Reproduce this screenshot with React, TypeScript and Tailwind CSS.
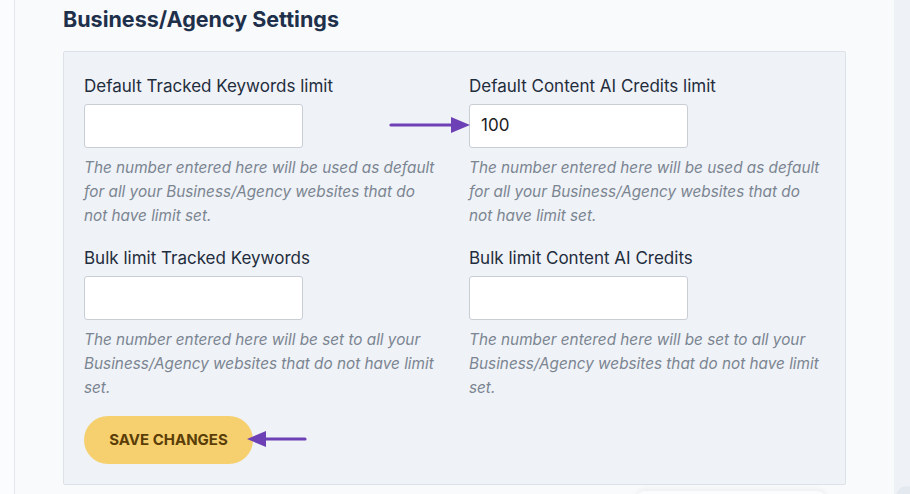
import React from "react";

const font = { fontFamily: "Inter, 'Liberation Sans', sans-serif" };

function Field({ label, value, lines }: { label: string; value?: string; lines: string[] }) {
  return (
    <div className="flex flex-col">
      <label className="text-[17px] leading-[24px] text-[#1f2d3d]">{label}</label>
      <div className="mt-[6px] h-[44px] w-[219px] rounded-[3px] border border-[#c9ced5] bg-white pl-[11px] flex items-center text-[17px] text-[#1c1c1e]">
        {value}
      </div>
      <p className="mt-[8px] text-[15.3px] leading-[24px] italic text-[#7b8591]">
        {lines.map((l, i) => (
          <span key={i} className="block whitespace-nowrap">{l}</span>
        ))}
      </p>
    </div>
  );
}

function ArrowRight() {
  return (
    <svg width="84" height="16" viewBox="0 0 84 16" className="absolute left-[388px] top-[117px]">
      <line x1="3" y1="8" x2="66" y2="8" stroke="#6d41b5" strokeWidth="3.2" strokeLinecap="round" />
      <polygon points="63,0 82,8 63,16" fill="#6d41b5" />
    </svg>
  );
}

function ArrowLeft() {
  return (
    <svg width="62" height="16" viewBox="0 0 62 16" className="absolute left-[246px] top-[431px]">
      <line x1="18" y1="8" x2="59" y2="8" stroke="#6d41b5" strokeWidth="3.2" strokeLinecap="round" />
      <polygon points="20,0 1,8 20,16" fill="#6d41b5" />
    </svg>
  );
}

export default function App() {
  const helpDefault = [
    "The number entered here will be used as default",
    "for all your Business/Agency websites that do",
    "not have limit set.",
  ];
  const helpBulk = [
    "The number entered here will be set to all your",
    "Business/Agency websites that do not have limit",
    "set.",
  ];
  return (
    <div style={font} className="relative h-[494px] w-[910px] overflow-hidden bg-[#fafbfc] flex">
      <div className="w-[14px] shrink-0 bg-[#fbfcfd]" />
      <div className="flex-1 border-l border-[#e3e7ec] bg-[#f9fafc] pl-[48px] pt-[5px]">
        <h2 className="text-[21.5px] leading-[28px] font-bold text-[#20304a]">Business/Agency Settings</h2>
        <div className="mt-[18px] w-[783px] rounded-[2px] border border-[#dde2e8] bg-[#eff2f7] pl-[20px] pt-[22px] pb-[20px]">
          <div className="grid grid-cols-[385px_1fr] gap-y-[18px]">
            <Field label="Default Tracked Keywords limit" lines={helpDefault} />
            <Field label="Default Content AI Credits limit" value="100" lines={helpDefault} />
            <Field label="Bulk limit Tracked Keywords" lines={helpBulk} />
            <Field label="Bulk limit Content AI Credits" lines={helpBulk} />
          </div>
          <button className="mt-[16px] h-[48px] w-[169px] rounded-full bg-[#f6d06f] text-[15px] font-bold text-[#5a3d07]">
            SAVE CHANGES
          </button>
        </div>
        <div className="ml-[572px] mt-[6px] h-[20px] w-[192px] rounded-full bg-[#fbfcfd] shadow-[0_-2px_6px_rgba(0,0,0,0.05)]" />
      </div>
      <div className="w-[16px] shrink-0 bg-[#eef1f6] flex flex-col justify-end">
        <div className="mb-[-14px] ml-[2px] h-[22px] w-[22px] rounded-full bg-[#e4e9f0]" />
      </div>
      <ArrowRight />
      <ArrowLeft />
    </div>
  );
}
